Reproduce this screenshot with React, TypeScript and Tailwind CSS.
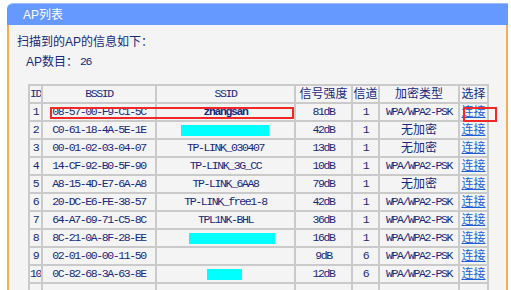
import React from "react";

type Row = {
  id: number;
  bssid: string;
  ssid: string;
  cyan?: { w: number; shift: number };
  sig: string;
  ch: string;
  enc: string;
  bold?: boolean;
};

const rows: Row[] = [
  { id: 1, bssid: "08-57-00-F9-C1-5C", ssid: "zhangsan", sig: "81dB", ch: "1", enc: "WPA/WPA2-PSK", bold: true },
  { id: 2, bssid: "C0-61-18-4A-5E-1E", ssid: "", cyan: { w: 88, shift: -1 }, sig: "42dB", ch: "1", enc: "无加密" },
  { id: 3, bssid: "00-01-02-03-04-07", ssid: "TP-LINK_030407", sig: "13dB", ch: "1", enc: "无加密" },
  { id: 4, bssid: "14-CF-92-B0-5F-90", ssid: "TP-LINK_3G_CC", sig: "10dB", ch: "1", enc: "WPA/WPA2-PSK" },
  { id: 5, bssid: "A8-15-4D-E7-6A-A8", ssid: "TP-LINK_6AA8", sig: "79dB", ch: "1", enc: "无加密" },
  { id: 6, bssid: "20-DC-E6-FE-38-57", ssid: "TP-LINK_free1-8", sig: "42dB", ch: "1", enc: "WPA/WPA2-PSK" },
  { id: 7, bssid: "64-A7-69-71-C5-8C", ssid: "TPL1NK-BHL", sig: "36dB", ch: "1", enc: "WPA/WPA2-PSK" },
  { id: 8, bssid: "8C-21-0A-8F-28-EE", ssid: "", cyan: { w: 86, shift: 6 }, sig: "16dB", ch: "1", enc: "WPA/WPA2-PSK" },
  { id: 9, bssid: "02-01-00-00-11-50", ssid: "", sig: "9dB", ch: "6", enc: "WPA/WPA2-PSK" },
  { id: 10, bssid: "0C-82-68-3A-63-8E", ssid: "", cyan: { w: 35, shift: -1 }, sig: "12dB", ch: "6", enc: "WPA/WPA2-PSK" },
];

const mono = "font-['Liberation_Mono',monospace] text-[11.5px] tracking-[-1.4px]";
const cjk = "font-['Liberation_Sans','Noto_Sans_CJK_SC',sans-serif] text-[12px]";
const cell = "h-[18px] border-r-2 border-b-2 border-[#cacaca] flex items-center justify-center overflow-hidden whitespace-nowrap";
const gridCols = "grid grid-cols-[13px_114px_139px_57px_27px_80px_29px]";

function Txt({ v }: { v: string }) {
  const isCjk = /[\u4e00-\u9fff]/.test(v);
  return <span className={isCjk ? cjk : mono}>{v}</span>;
}

export default function App() {
  return (
    <div className="w-[511px] h-[290px] overflow-hidden bg-white pt-[3px] pl-[7px] pr-[3px] text-[#18297e]">
      <div className="flex flex-col h-full">
        <div className={`h-[22px] shrink-0 bg-[#6699ff] rounded-tl-[6px] border-t border-[#9dbdff] flex items-center pl-[16px] text-white ${cjk}`}>
          AP列表
        </div>
        <div className="flex-1 bg-[#f4f4f4] border-l-2 border-r-2 border-[#f7ab56] pl-[8px] pt-[9px]">
          <div className={`h-[16px] leading-[16px] ${cjk}`}>扫描到的AP的信息如下：</div>
          <div className={`mt-[4px] h-[16px] leading-[16px] pl-[9px] flex ${cjk}`}>
            <span className="w-[54px]">AP数目：</span>
            <span className={mono}>26</span>
          </div>
          <div className="relative mt-[14px] ml-[11px] w-[461px] border-l-2 border-t-2 border-[#cacaca]">
            <div className={gridCols}>
              <div className={cell}><Txt v="ID" /></div>
              <div className={cell}><Txt v="BSSID" /></div>
              <div className={cell}><Txt v="SSID" /></div>
              <div className={cell}><Txt v="信号强度" /></div>
              <div className={cell}><Txt v="信道" /></div>
              <div className={cell}><Txt v="加密类型" /></div>
              <div className={cell}><Txt v="选择" /></div>
            </div>
            {rows.map((r) => (
              <div key={r.id} className={gridCols}>
                <div className={cell}><span className={mono}>{r.id}</span></div>
                <div className={cell}><span className={mono}>{r.bssid}</span></div>
                <div className={cell}>
                  {r.cyan ? (
                    <div
                      className="h-[11px] bg-[#00ffff]"
                      style={{ width: r.cyan.w, transform: `translateX(${r.cyan.shift}px)` }}
                    />
                  ) : (
                    <span className={`${mono} ${r.bold ? "font-bold" : ""}`}>{r.ssid}</span>
                  )}
                </div>
                <div className={cell}><span className={mono}>{r.sig}</span></div>
                <div className={cell}><span className={mono}>{r.ch}</span></div>
                <div className={cell}><Txt v={r.enc} /></div>
                <div className={cell}>
                  <a className={`${cjk} text-[#1d5fd6] underline`} href="#">连接</a>
                </div>
              </div>
            ))}
            <div className={gridCols}>
              <div className={cell}></div>
              <div className={cell}></div>
              <div className={cell}></div>
              <div className={cell}></div>
              <div className={cell}></div>
              <div className={cell}></div>
              <div className={cell}></div>
            </div>
            <div className="absolute left-[20px] top-[21px] w-[244px] h-[12px] border-2 border-[#f02828]" />
            <div className="absolute left-[433px] top-[21px] w-[34px] h-[15px] border-2 border-[#f02828]" />
          </div>
        </div>
      </div>
    </div>
  );
}
